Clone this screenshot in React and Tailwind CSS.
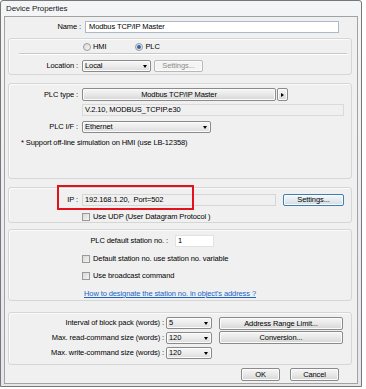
import React from 'react';

const Tri = () => (
  <span className="w-0 h-0 border-l-[2.5px] border-r-[2.5px] border-t-[3px] border-l-transparent border-r-transparent border-t-black" />
);

const Select = ({ value, className }) => (
  <div className={`flex items-center justify-between h-[12px] pl-[2px] pr-[3px] border border-[#8a8a8a] rounded-[2px] bg-linear-to-b from-[#f7f7f7] via-[#ececec] to-[#dcdcdc] shadow-[inset_0_0_0_1px_#fcfcfc] ${className}`}>
    <span>{value}</span>
    <Tri />
  </div>
);

const Button = ({ children, className, disabled, focus }) => (
  <div
    className={`flex items-center justify-center rounded-[2px] border shadow-[inset_0_0_0_1px_#fbfbfb] ${
      disabled
        ? 'border-[#b5b9bc] bg-[#f4f4f4] text-[#8d8d8d]'
        : focus
        ? 'border-[#3c7fb1] bg-linear-to-b from-[#f5f8fb] via-[#e5ebf0] to-[#d3dbe2]'
        : 'border-[#8a8a8a] bg-linear-to-b from-[#f6f6f6] via-[#e8e8e8] to-[#d6d6d6]'
    } ${className}`}
  >
    {children}
  </div>
);

const Check = ({ label }) => (
  <div className="flex items-center h-[9px] ml-[73px]">
    <span className="w-[8px] h-[8px] border border-[#9a9a9a] bg-linear-to-br from-[#d8d8d8] to-[#f4f4f4]" />
    <span className="ml-[3px]">{label}</span>
  </div>
);

const Radio = ({ checked }) => (
  <span className="w-[8px] h-[8px] rounded-full border border-[#9a9a9a] bg-linear-to-br from-[#dadada] to-[#f6f6f6] flex items-center justify-center">
    {checked && <span className="w-[4px] h-[4px] rounded-full bg-[#2a66b4]" />}
  </span>
);

const Group = ({ className, children }) => (
  <div className={`border border-[#d6d6d6] rounded-[3px] shadow-[inset_1px_1px_0_#fbfbfb] flex flex-col ${className}`}>
    {children}
  </div>
);

const Label = ({ children, w }) => (
  <div className={`text-right shrink-0 whitespace-nowrap ${w}`}>{children}</div>
);

export default function App() {
  return (
    <div className="w-[366px] h-[389px] bg-white relative text-[7.5px] leading-none text-black font-['Liberation_Sans',Arial,sans-serif] tracking-[-0.1px]">
      <div className="w-[362px] h-[387px] border border-[#777] rounded-t-[3px] bg-linear-to-b from-[#f4f5f7] to-[#e4e6e9] flex flex-col px-[3px] pb-[2px]">
        {/* Title */}
        <div className="h-[15px] flex items-center pl-[2px] text-[#222] text-[8px]">Device Properties</div>

        {/* Panel */}
        <div className="flex-1 border border-[#a2a2a2] bg-[#f0f0f0] flex flex-col pl-[3px] pr-[5px]">
          {/* Name */}
          <div className="flex items-center mt-[4px] h-[12px]">
            <Label w="w-[73px]">Name :</Label>
            <div className="ml-[4px] w-[254px] h-[12px] bg-white border border-[#abbacb] flex items-center pl-[3px]">
              Modbus TCP/IP Master
            </div>
          </div>

          {/* HMI / PLC, Location */}
          <Group className="mt-[5px] h-[37px]">
            <div className="flex items-center h-[8px] mt-[4px] ml-[74px]">
              <Radio />
              <span className="ml-[2px]">HMI</span>
              <span className="ml-[29px]"><Radio checked /></span>
              <span className="ml-[2px]">PLC</span>
            </div>
            <div className="mt-[2px] ml-[10px] mr-[4px] h-[2px] border-t border-[#c8c8c8] border-b border-b-white" />
            <div className="flex items-center mt-[5px]">
              <Label w="w-[69px]">Location :</Label>
              <Select value="Local" className="ml-[4px] w-[69px]" />
              <Button disabled className="ml-[3px] w-[49px] h-[12px]">Settings...</Button>
            </div>
          </Group>

          {/* PLC type */}
          <Group className="mt-[8px] h-[96px]">
            <div className="flex items-center mt-[4px]">
              <Label w="w-[69px]">PLC type :</Label>
              <Button className="ml-[4px] w-[194px] h-[13px]">Modbus TCP/IP Master</Button>
              <Button className="ml-[1px] w-[11px] h-[13px]">
                <span className="w-0 h-0 border-t-[2.5px] border-b-[2.5px] border-l-[3px] border-t-transparent border-b-transparent border-l-black" />
              </Button>
            </div>
            <div className="ml-[73px] mt-[3px] w-[262px] h-[12px] border border-[#dadada] flex items-center pl-[2px]">
              V.2.10, MODBUS_TCPIP.e30
            </div>
            <div className="flex items-center mt-[5px]">
              <Label w="w-[69px]">PLC I/F :</Label>
              <Select value="Ethernet" className="ml-[4px] w-[129px]" />
            </div>
            <div className="ml-[12px] mt-[6px]">* Support off-line simulation on HMI (use LB-12358)</div>
          </Group>

          {/* IP */}
          <Group className="mt-[8px] h-[36px]">
            <div className="flex items-center mt-[6px]">
              <Label w="w-[69px]">IP :</Label>
              <div className="ml-[4px] w-[194px] h-[12px] border border-[#d6d6d6] flex items-center pl-[2px]">
                192.168.1.20,&nbsp;&nbsp;Port=502
              </div>
              <Button focus className="ml-[7px] w-[61px] h-[12px]">Settings...</Button>
            </div>
            <div className="mt-[6px]">
              <Check label="Use UDP (User Datagram Protocol )" />
            </div>
          </Group>

          {/* Station */}
          <Group className="mt-[6px] h-[72px]">
            <div className="flex items-center mt-[5px]">
              <Label w="w-[159px]">PLC default station no. :</Label>
              <div className="ml-[7px] w-[39px] h-[12px] bg-white border border-[#e2e2e2] flex items-center pl-[2px]">1</div>
            </div>
            <div className="mt-[7px]">
              <Check label="Default station no. use station no. variable" />
            </div>
            <div className="mt-[8px]">
              <Check label="Use broadcast command" />
            </div>
            <div className="mt-[10px] ml-[75px] text-[#1a64c8] underline">
              How to designate the station no. in object's address ?
            </div>
          </Group>

          {/* Block pack */}
          <Group className="mt-[11px] h-[53px]">
            <div className="flex mt-[4px]">
              <div className="flex flex-col gap-[3px]">
                {[
                  ['Interval of block pack (words) :', '5'],
                  ['Max. read-command size (words) :', '120'],
                  ['Max. write-command size (words) :', '120'],
                ].map(([l, v]) => (
                  <div key={l} className="flex items-center">
                    <Label w="w-[155px]">{l}</Label>
                    <Select value={v} className="ml-[2px] w-[46px]" />
                  </div>
                ))}
              </div>
              <div className="flex flex-col gap-[1px] ml-[7px]">
                <Button className="w-[124px] h-[13px]">Address Range Limit...</Button>
                <Button className="w-[124px] h-[13px]">Conversion...</Button>
              </div>
            </div>
          </Group>

          {/* OK / Cancel */}
          <div className="flex justify-end mt-[3px] mr-[13px] gap-[10px]">
            <Button className="w-[39px] h-[13px]">OK</Button>
            <Button className="w-[49px] h-[13px]">Cancel</Button>
          </div>
        </div>
      </div>

      {/* Highlight box */}
      <div className="absolute left-[57px] top-[185px] w-[137px] h-[25px] border-2 border-[#e3131b]" />
    </div>
  );
}
